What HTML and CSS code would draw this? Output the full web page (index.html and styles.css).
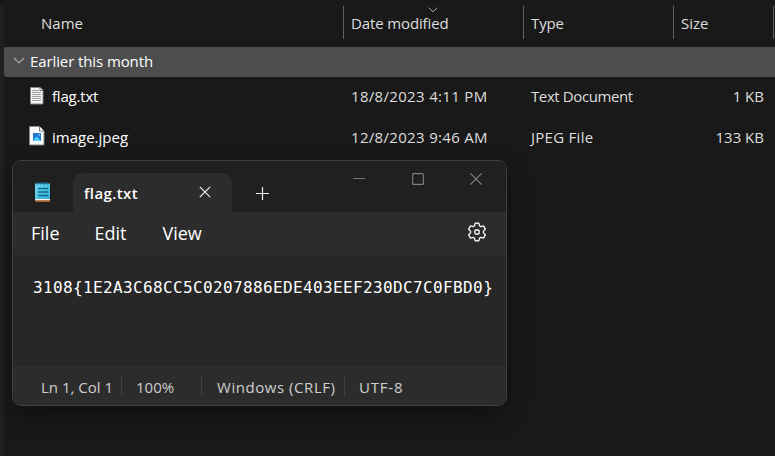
FILE: index.html
```html
<!DOCTYPE html>
<html lang="en">
<head>
<meta charset="utf-8">
<title>flag.txt</title>
<link rel="stylesheet" href="styles.css">
</head>
<body>
<main class="explorer">
  <div class="columns header">
    <span class="cell name">Name</span>
    <span class="cell"><span class="w-mod">Date modified</span>
      <svg class="sort" width="10" height="6" viewBox="0 0 10 6"><path d="M.7.7 5 4.8 9.3.7" fill="none" stroke="#aaa"/></svg>
    </span>
    <span class="cell"><span class="w-type">Type</span></span>
    <span class="cell">Size</span>
    <span class="cell"></span>
  </div>
  <div class="group">
    <svg width="12" height="8" viewBox="0 0 12 8"><path d="M1 1l5 5 5-5" fill="none" stroke="#aaa" stroke-width="1.1"/></svg>
    <span class="w-group">Earlier this month</span>
  </div>
  <div class="columns row">
    <span class="file">
      <svg width="16" height="20" viewBox="0 0 16 20"><path d="M1.5 1.500h9.500l3 3v13.500h-12.500z" fill="#f4f4f4" stroke="#858585"/><path d="M11 1.500v3h3" fill="#fff" stroke="#777"/><path d="M3 4.500h7M3 6.500h9M3 8.500h9M3 10.500h9M3 12.500h9M3 14.500h9" stroke="#a0a0a0"/></svg>
      <span class="w-flag">flag.txt</span>
    </span>
    <span class="data"><span class="w-date">18/8/2023 4:11 PM</span></span>
    <span class="data"><span class="w-text">Text Document</span></span>
    <span class="data size">1 KB</span>
  </div>
  <div class="columns row">
    <span class="file">
      <svg class="image" width="16" height="20" viewBox="0 0 16 20"><path d="M.5.5h10l4.500 4.500v14H.5z" fill="#fafafa" stroke="#858585"/><path d="M10.500 .5v4.500h4.500" fill="#fff" stroke="#777"/><path d="M4 7h8v8H4z" fill="#2178d4"/><path d="M4 15l3.700-4.500L12 15z" fill="#50d8fa"/><path d="M9.500 8.200h1.300v1.300H9.500z" fill="#d8f4ff"/></svg>
      <span>image.jpeg</span>
    </span>
    <span class="data"><span class="w-date">12/8/2023 9:46 AM</span></span>
    <span class="data"><span class="w-jpeg">JPEG File</span></span>
    <span class="data size">133 KB</span>
  </div>
</main>

<section class="notepad">
  <div class="titlebar">
    <svg class="app" width="16" height="21" viewBox="0 0 16 21"><defs><linearGradient id="g" x2="1" y2="1"><stop stop-color="#70d9f2"/><stop offset="1" stop-color="#35a9d2"/></linearGradient></defs><path d="M1 1.500h15v17H1z" fill="url(#g)"/><path d="M1 17h15v1.500H1z" fill="#f4f0ec"/><path d="M1 18.500h15V20H1.500z" fill="#b45a14"/><path d="M3.500 0v2.500M6.500 0v2.500M10 0v2.500M13.300 0v2.500" stroke="#087095" stroke-width="1.500"/><path d="M4 6.500h10M4 10h10M4 13.500h10" stroke="#087095" stroke-width="1.700"/></svg>
    <div class="tab">
      <span class="w-tab">flag.txt</span>
      <svg width="12" height="12" viewBox="0 0 12 12"><path d="M.8.8l10.400 10.400M11.200.8.8 11.200" stroke="#eee" stroke-width="1.200"/></svg>
    </div>
    <svg class="plus" width="13" height="13" viewBox="0 0 13 13"><path d="M6.500 0v13M0 6.500h13" stroke="#f2f2f2" stroke-width="1.200"/></svg>
    <div class="controls">
      <svg width="12" height="12" viewBox="0 0 12 12"><path d="M0 5.500h12" stroke="#777"/></svg>
      <svg width="12" height="12" viewBox="0 0 12 12"><rect x=".6" y=".6" width="10.800" height="10.800" rx="1" fill="none" stroke="#808080" stroke-width="1.100"/></svg>
      <svg width="12" height="12" viewBox="0 0 12 12"><path d="M.4.4l11.200 11.200M11.600.4.4 11.600" stroke="#888" stroke-width="1.100"/></svg>
    </div>
  </div>
  <nav class="menu">
    <span>File</span><span class="w-edit">Edit</span><span class="w-view">View</span>
    <svg width="20" height="20" viewBox="0 0 20 20"><path d="M8.100 1.300h3.800l.6 2.500 1.500.9 2.500-.8 1.900 3.300-1.900 1.800v2l1.900 1.800-1.900 3.300-2.500-.8-1.500.9-.6 2.500H8.100l-.6-2.500-1.500-.9-2.500.8-1.900-3.300L3.500 11V9L1.600 7.200l1.900-3.300 2.500.8 1.500-.9z" fill="none" stroke="#eee" stroke-width="1.400" stroke-linejoin="round"/><circle cx="10" cy="10" r="2.300" fill="none" stroke="#eee" stroke-width="1.400"/></svg>
  </nav>
  <div class="editor">3108{1E2A3C68CC5C0207886EDE403EEF230DC7C0FBD0}</div>
  <footer class="status">
    <span class="pos">Ln 1, Col 1</span>
    <span class="zoom">100%</span>
    <span class="eol">Windows (CRLF)</span>
    <span class="enc">UTF-8</span>
  </footer>
</section>
</body>
</html>
```
FILE: styles.css
```css
* { box-sizing: border-box; }
body {
  margin: 0;
  height: 456px;
  overflow: hidden;
  background: #191919;
  color: #dedede;
  font: 15px/20px "Open Sans", "Noto Sans", sans-serif;
  white-space: nowrap;
}
svg { display: block; flex: none; }
.explorer {
  height: 450px;
  margin-top: 6px;
  border-left: 4px solid #202020;
}
.columns { display: grid; grid-template-columns: 339px 180px 150px 100px 2px; }
.header { height: 33px; }
.cell {
  position: relative;
  border-left: 1px solid #636363;
  padding: 7px 0 0 7px;
}
.cell.name { border: 0; padding-left: 37px; }
.sort { position: absolute; left: 84px; top: 1px; }
.w-mod, .w-type { letter-spacing: -.13px; }
.group {
  display: flex;
  align-items: center;
  gap: 5px;
  height: 30px;
  margin-top: 8px;
  padding: 0 0 2px 9px;
  background: #4d4d4d;
  border-radius: 2px 0 0 2px;
  color: #fff;
}
.w-group { letter-spacing: -.1px; }
.group + .row { margin-top: -2px; }
.row { height: 41px; align-items: center; }
.file { display: flex; align-items: center; gap: 7px; padding-left: 25px; color: #fff; }
.file .image { margin-top: -2px; }
.data { padding-left: 8px; }
.size { text-align: right; padding: 0 9px 0 0; }
.w-flag { letter-spacing: -.2px; }
.w-date { letter-spacing: .32px; }
.w-text { letter-spacing: -.4px; }
.w-jpeg { letter-spacing: .28px; }

.notepad {
  position: absolute;
  left: 12px;
  top: 160px;
  width: 495px;
  height: 246px;
  display: flex;
  flex-direction: column;
  border: 1px solid #404040;
  border-radius: 9px;
  background: #272727;
  box-shadow: 0 8px 24px rgba(0, 0, 0, .42);
  overflow: hidden;
}
.titlebar { display: flex; height: 51px; background: #202020; }
.app { margin: 21px 0 0 21px; }
.tab {
  display: flex;
  align-items: center;
  justify-content: space-between;
  width: 159px;
  height: 39px;
  margin: 12px 0 0 23px;
  padding: 0 21px 2px 11px;
  border-radius: 9px 9px 0 0;
  background: #2c2c2c;
  color: #fff;
  font-weight: 600;
}
.w-tab { letter-spacing: .4px; padding-top: 3px; }
.plus { margin: 26px 0 0 24px; }
.controls { display: flex; gap: 46.5px; margin: 12px 0 0 84px; }
.menu {
  display: flex;
  align-items: center;
  height: 41px;
  padding: 1px 19px 0 18px;
  border-bottom: 1px solid #272727;
  background: #2c2c2c;
  color: #fff;
  font-size: 18px;
}
.menu svg { margin: -2px 0 0 auto; }
.w-edit { margin: 0 36px 0 35px; }
.editor {
  flex: 1;
  padding: 22px 0 0 20px;
  border-top: 3px solid #2b2b2b;
  color: #fff;
  font-family: "DejaVu Sans Mono", monospace;
  font-size: 16px;
  letter-spacing: .37px;
}
.status {
  display: flex;
  align-items: center;
  height: 39px;
  background: #2c2c2c;
  color: #cfcfcf;
}
.status > span { border-right: 1px solid #404040; padding-top: 2px; line-height: 18px; }
.status .pos { width: 109px; padding-left: 28px; }
.status .zoom { width: 80px; padding-left: 14px; }
.status .eol { width: 143px; padding-left: 15px; letter-spacing: .55px; }
.status .enc { padding-left: 14px; border: 0; letter-spacing: .8px; }
```
